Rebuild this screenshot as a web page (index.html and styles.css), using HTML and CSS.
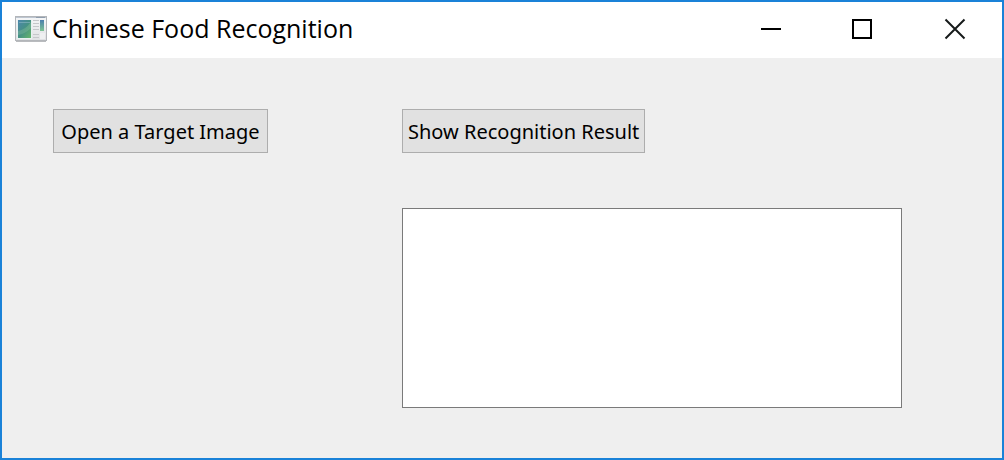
FILE: index.html
```html
<!DOCTYPE html>
<html lang="en">
<head>
<meta charset="utf-8">
<title>Chinese Food Recognition</title>
<link rel="stylesheet" href="styles.css">
</head>
<body>
<div class="window">
  <header class="titlebar">
    <svg class="app-icon" width="32" height="28" viewBox="0 0 32 28" aria-hidden="true">
      <defs>
        <linearGradient id="pane" x1="0" y1="0" x2="1" y2="1">
          <stop offset="0" stop-color="#4d86ad"/>
          <stop offset="0.5" stop-color="#459184"/>
          <stop offset="1" stop-color="#67b56c"/>
        </linearGradient>
        <linearGradient id="side" x1="0" y1="0" x2="0" y2="1">
          <stop offset="0" stop-color="#4b7fae"/>
          <stop offset="1" stop-color="#7dc493"/>
        </linearGradient>
        <linearGradient id="frame" x1="0" y1="0" x2="0" y2="1">
          <stop offset="0" stop-color="#f6f7f8"/>
          <stop offset="1" stop-color="#dfe0e3"/>
        </linearGradient>
      </defs>
      <rect x="0.5" y="0.5" width="31" height="24" fill="url(#frame)" stroke="#b3b6ba"/>
      <path d="M1 25.5H31" stroke="#b9bbbe"/>
      <path d="M1 1.5H31" stroke="#bcc5d0"/>
      <path d="M21 1.5H30" stroke="#8f9dad"/>
      <rect x="2" y="4" width="15" height="19" fill="#e8f0f0"/>
      <rect x="3" y="4" width="13" height="18" fill="url(#pane)"/>
      <path d="M3 15Q10 14 16 6V12Q10 18 3 19Z" fill="#8cc4a0" opacity="0.35"/>
      <path d="M4 6.5H15" stroke="#83b2bd" opacity="0.7"/>
      <path d="M18 4.5H24M18 7.5H24M18 10.5H24M18 13.5H24M18 18.5H24M18 21.5H24" stroke="#c5c7ca"/>
      <rect x="25" y="4" width="4" height="11" fill="url(#side)"/>
      <rect x="25" y="17" width="5" height="6" fill="#eff0f1"/>
    </svg>
    <h1 class="title">Chinese Food Recognition</h1>
    <button class="control" type="button" aria-label="Minimize">
      <svg width="92" height="56" viewBox="0 0 92 56" fill="none" stroke="#000" stroke-width="2"><path d="M35 27H55"/></svg>
    </button>
    <button class="control" type="button" aria-label="Maximize">
      <svg width="92" height="56" viewBox="0 0 92 56" fill="none" stroke="#000" stroke-width="2"><rect x="35" y="18" width="18" height="18"/></svg>
    </button>
    <button class="control" type="button" aria-label="Close">
      <svg width="92" height="56" viewBox="0 0 92 56" fill="none" stroke="#161a1a" stroke-width="2"><path d="M35.5 17.5L54.5 36.5M54.5 17.5L35.5 36.5"/></svg>
    </button>
  </header>
  <main class="content">
    <div class="source">
      <button class="action" type="button">Open a Target Image</button>
    </div>
    <div class="result">
      <button class="action" type="button">Show Recognition Result</button>
      <textarea class="output" aria-label="Recognition result"></textarea>
    </div>
  </main>
</div>
</body>
</html>
```
FILE: styles.css
```css
* {
  box-sizing: border-box;
}

body {
  margin: 0;
  font-family: "Noto Sans", "Open Sans", sans-serif;
  color: #000;
}

.window {
  display: flex;
  flex-direction: column;
  min-height: 100vh;
  border: 2px solid #1a82d8;
  background: #efefef;
}

.titlebar {
  display: flex;
  align-items: center;
  padding-left: 13px;
  background: #fff;
}

.app-icon {
  flex: none;
}

.title {
  flex: 1;
  margin: 0;
  padding: 0 0 4px 5px;
  font-family: "Open Sans", sans-serif;
  font-size: 25px;
  font-weight: 400;
  line-height: 32px;
  white-space: nowrap;
}

.control {
  padding: 0;
  border: 0;
  background: transparent;
}

.control svg {
  display: block;
}

.content {
  display: grid;
  flex: 1;
  grid-template-columns: 349fr 500fr;
  padding: 51px 100px 50px 51px;
}

.result {
  display: flex;
  flex-direction: column;
  align-items: flex-start;
  gap: 55px;
}

.action {
  min-width: 215px;
  height: 44px;
  padding: 2px 5px 0;
  border: 1px solid #adadad;
  background: #e1e1e1;
  color: #000;
  font-family: "Noto Sans", sans-serif;
  font-size: 20px;
  line-height: 28px;
  white-space: nowrap;
}

.output {
  flex: 1;
  width: 100%;
  min-height: 120px;
  padding: 8px;
  border: 1px solid #7a7a7a;
  outline: 0;
  background: #fff;
  font: inherit;
  font-size: 20px;
  resize: none;
}
```
